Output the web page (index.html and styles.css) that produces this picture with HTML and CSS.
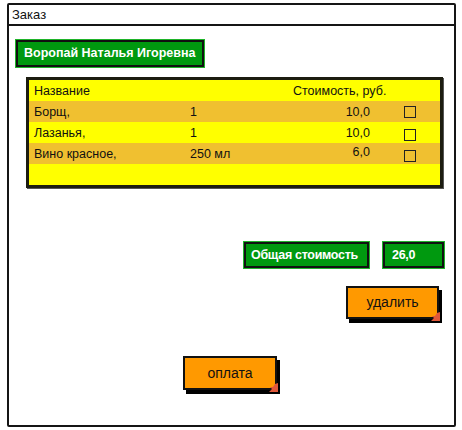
FILE: index.html
```html
<!DOCTYPE html>
<html lang="ru">
<head>
<meta charset="utf-8">
<link rel="stylesheet" href="styles.css">
</head>
<body>
<div class="window">
  <div class="titlebar">Заказ</div>
  <div class="content">
    <div class="label name">Воропай Наталья Игоревна</div>
    <div class="table">
      <div class="row head">
        <span>Название</span><span></span><span>Стоимость, руб.</span><span></span>
      </div>
      <div class="row alt">
        <span>Борщ,</span><span>1</span><span class="val">10,0</span><span class="cb"></span>
      </div>
      <div class="row">
        <span>Лазанья,</span><span>1</span><span class="val">10,0</span><span class="cb low"></span>
      </div>
      <div class="row alt">
        <span>Вино красное,</span><span>250 мл</span><span class="val up">6,0</span><span class="cb low"></span>
      </div>
      <div class="row"></div>
    </div>
    <div class="totals">
      <div class="label total">Общая стоимость</div>
      <div class="label sum">26,0</div>
    </div>
    <div class="btnrow">
      <div class="btn del">удалить<svg class="corner" width="9" height="9" viewBox="0 0 9 9"><path d="M9 0 L9 9 L0 9 L3 6 L1 4 L4 4 L6 1 Z" fill="#e0583a"/></svg></div>
    </div>
    <div class="btn pay">оплата<svg class="corner" width="9" height="9" viewBox="0 0 9 9"><path d="M9 0 L9 9 L0 9 L3 6 L1 4 L4 4 L6 1 Z" fill="#e0583a"/></svg></div>
  </div>
</div>
</body>
</html>
```
FILE: styles.css
```css
* { box-sizing: border-box; }
body {
  margin: 0;
  background: #fff;
  font-family: "Liberation Sans", Arial, sans-serif;
  color: #111;
}
.window {
  margin: 3px 0 0 7px;
  width: 449px;
  height: 424px;
  border: 2px solid #151515;
  border-radius: 2px;
}
.titlebar {
  height: 21px;
  line-height: 19px;
  border-bottom: 2px solid #151515;
  padding-left: 3px;
  font-size: 13px;
}
.content {
  display: flex;
  flex-direction: column;
  align-items: flex-start;
  padding: 14px 10px 0 7px;
}
.label {
  background: #00990f;
  border: 2px solid #111;
  outline: 1px solid #1fb42a;
  color: #fff;
  font-size: 12.5px;
  font-weight: bold;
  height: 26px;
  line-height: 22px;
  padding: 0 5px;
  white-space: nowrap;
  letter-spacing: -0.3px;
}
.name { width: 188px; height: 27px; letter-spacing: 0; padding-left: 6px; }
.table {
  margin: 10px 0 0 10px;
  width: 417px;
  height: 111px;
  border: 3px solid #1c1c10;
  background: #ffff00;
  box-shadow: 1px 1px 0 #555;
}
.row {
  display: grid;
  grid-template-columns: 156px 103px 94px 1fr;
  align-items: center;
  height: 21px;
  padding-left: 5px;
  font-size: 12.5px;
}
.row.alt { background: #f0c030; }
.val { text-align: right; padding-right: 17px; }
.val.up { position: relative; top: -2px; }
.cb {
  width: 12px;
  height: 12px;
  margin-left: 17px;
  border: 1.5px solid #222;
}
.cb.low { position: relative; top: 2px; }
.totals {
  display: flex;
  gap: 14px;
  align-self: flex-end;
  margin-top: 54px;
}
.total { width: 125px; }
.sum { width: 61px; padding-left: 7px; }
.btnrow {
  align-self: flex-end;
  margin-top: 18px;
  margin-right: 5px;
}
.btn {
  position: relative;
  width: 93px;
  height: 33px;
  background: #ff9900;
  border: 2px solid #111;
  box-shadow: 3px 4px 0 #000;
  font-size: 14px;
  text-align: center;
  line-height: 29px;
  color: #111;
}
.pay { margin: 37px 0 0 167px; width: 94px; height: 34px; line-height: 30px; }
.corner {
  position: absolute;
  right: -3px;
  bottom: -4px;
}
```
